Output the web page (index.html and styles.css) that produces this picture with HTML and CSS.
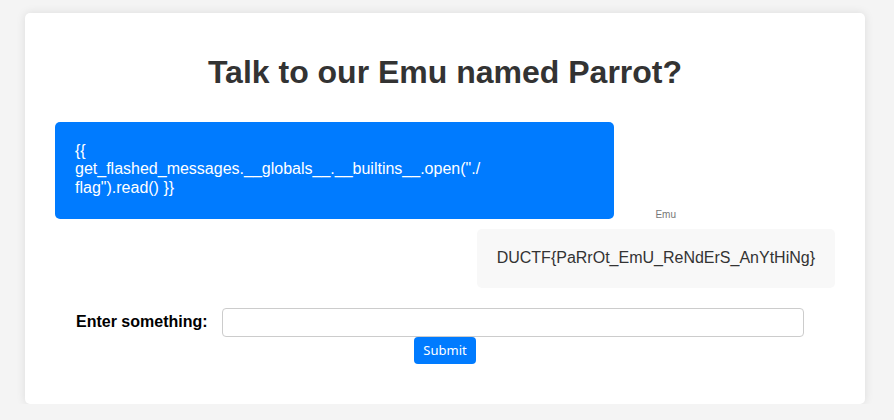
FILE: index.html
```html
<!DOCTYPE html>
<html>
<head>
<meta charset="utf-8">
<link rel="stylesheet" href="styles.css">
</head>
<body>
<div class="card">
  <h1 class="title">Talk to our Emu named Parrot?</h1>
  <div class="chat">
    <div class="msg-user"><span class="msg-text">{{ get_flashed_messages.__globals__.__builtins__.open("./<wbr>flag").read() }}</span></div>
    <div class="sender">Emu</div>
    <div class="msg-bot">DUCTF{PaRrOt_EmU_ReNdErS_AnYtHiNg}</div>
  </div>
  <form class="form">
    <div class="form-row">
      <label class="label" for="q">Enter something:</label>
      <input class="input" id="q" type="text">
    </div>
    <div class="btn-row">
      <button class="btn" type="button">Submit</button>
    </div>
  </form>
</div>
</body>
</html>
```

FILE: styles.css
```css
html, body {
  margin: 0;
  padding: 0;
}
body {
  background: #f4f4f4;
  font-family: "Liberation Sans", Arial, sans-serif;
  padding-top: 13px;
}
.card {
  width: 840px;
  box-sizing: border-box;
  margin-left: 25px;
  background: #fff;
  border-radius: 5px;
  box-shadow: 0 0 10px rgba(0, 0, 0, 0.1);
  padding: 20px 30px 40px;
}
.title {
  margin: 21px 0 20px;
  font-size: 32px;
  font-weight: bold;
  color: #333;
  text-align: center;
}
.chat {
  display: flex;
  flex-direction: column;
  margin-top: 31px;
}
.msg-user {
  align-self: flex-start;
  width: 559px;
  box-sizing: border-box;
  padding: 20px 20px 22px;
  background: #007bff;
  color: #fff;
  border-radius: 5px;
  font-size: 16px;
  line-height: 18.4px;
}
.msg-text {
  display: block;
  max-width: 416px;
}
.sender {
  align-self: flex-end;
  margin: -11px 159px 0 0;
  font-size: 10px;
  line-height: 13px;
  color: #777;
}
.msg-bot {
  align-self: flex-end;
  margin-top: 8px;
  padding: 20px;
  background: #f8f8f8;
  color: #333;
  border-radius: 5px;
  font-size: 16px;
  line-height: 18.4px;
}
.form {
  margin-top: 20px;
}
.form-row {
  display: flex;
  align-items: center;
  padding-left: 21px;
}
.label {
  font-weight: bold;
  font-size: 16px;
  color: #000;
  margin-right: 14px;
}
.input {
  width: 582px;
  height: 29px;
  box-sizing: border-box;
  border: 1px solid #ccc;
  border-radius: 4px;
  padding: 4px 8px;
  font-size: 14px;
}
.btn-row {
  display: flex;
  justify-content: center;
}
.btn {
  height: 27px;
  width: 62px;
  border: none;
  border-radius: 4px;
  background: #007bff;
  color: #fff;
  font-family: "Noto Sans", "DejaVu Sans", sans-serif;
  font-size: 13px;
  padding: 0;
}
```
